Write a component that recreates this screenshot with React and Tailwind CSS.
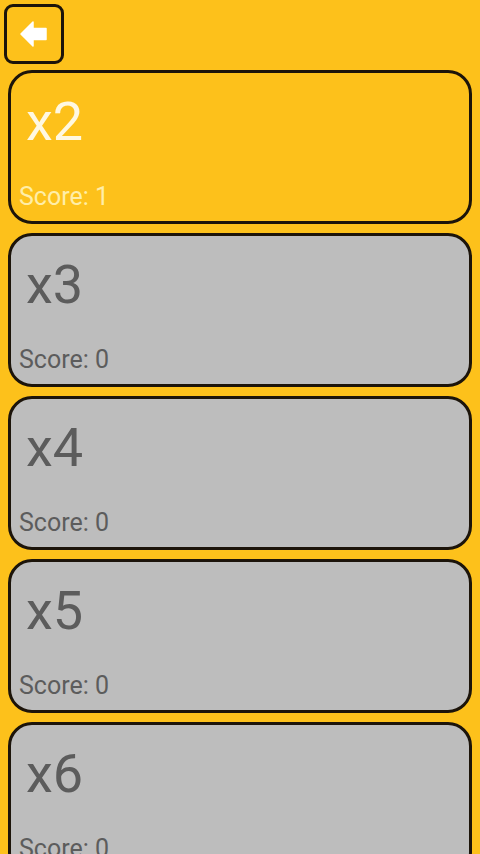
import React from "react";

const items = [
  { label: "x2", score: 1, active: true },
  { label: "x3", score: 0 },
  { label: "x4", score: 0 },
  { label: "x5", score: 0 },
  { label: "x6", score: 0 },
];

export default function App() {
  return (
    <div
      className="w-[480px] h-[854px] overflow-hidden bg-[#fdc11b] flex flex-col"
      style={{ fontFamily: "Roboto, 'Noto Sans', sans-serif" }}
    >
      <div className="pl-[4px] pt-[4px]">
        <button className="w-[60px] h-[60px] border-[3px] border-[#1c140a] rounded-[9px] flex items-center justify-center bg-[#fdc11b]">
          <svg width="27" height="26" viewBox="0 0 27 26" className="ml-[-2px]">
            <polygon
              points="1,13 13,1 13,7.5 26,7.5 26,18.5 13,18.5 13,25"
              fill="#ffffff"
              stroke="#ffffff"
              strokeWidth="1.5"
              strokeLinejoin="round"
            />
          </svg>
        </button>
      </div>
      <div className="flex flex-col gap-[9px] mt-[6px] px-[8px]">
        {items.map((it) => (
          <div
            key={it.label}
            className={`h-[154px] shrink-0 border-[3px] border-[#1c140a] rounded-[24px] flex flex-col justify-between pt-[22px] pb-[12px] ${
              it.active ? "bg-[#fdc11b]" : "bg-[#bdbdbd]"
            }`}
          >
            <div
              className={`pl-[15px] text-[54px] leading-[54px] ${
                it.active ? "text-[#fff8e1]" : "text-[#5c5c5c]"
              }`}
            >
              {it.label}
            </div>
            <div
              className={`pl-[8px] text-[25px] leading-[25px] ${
                it.active ? "text-[#ffeea8]" : "text-[#5c5c5c]"
              }`}
            >
              Score: {it.score}
            </div>
          </div>
        ))}
      </div>
    </div>
  );
}
